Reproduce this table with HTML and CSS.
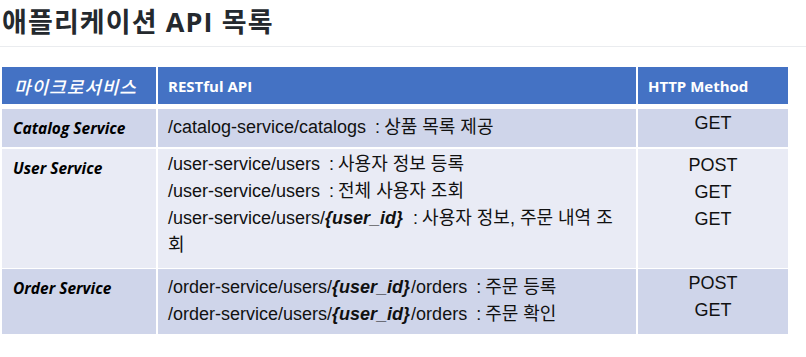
FILE: index.html
```html
<!DOCTYPE html>
<html lang="ko">
<head>
<meta charset="utf-8">
<title>애플리케이션 API 목록</title>
<link rel="stylesheet" href="styles.css">
</head>
<body>
<header class="page-head">
  <h1 class="title">애플리케이션 API 목록</h1>
</header>
<section class="api-table">
  <div class="row head">
    <div class="cell svc-head">마이크로서비스</div>
    <div class="cell col-head">RESTful API</div>
    <div class="cell col-head">HTTP Method</div>
  </div>
  <div class="row odd r1">
    <div class="cell svc">Catalog Service</div>
    <div class="cell api">/catalog-service/catalogs<span class="sep">:</span>상품 목록 제공</div>
    <div class="cell method">GET</div>
  </div>
  <div class="row even r2">
    <div class="cell svc">User Service</div>
    <div class="cell api">
      <div>/user-service/users<span class="sep">:</span>사용자 정보 등록</div>
      <div>/user-service/users<span class="sep">:</span>전체 사용자 조회</div>
      <div>/user-service/users/<b class="param">{user_id}</b><span class="sep">:</span>사용자 정보, 주문 내역 조회</div>
    </div>
    <div class="cell method">
      <div>POST</div>
      <div>GET</div>
      <div>GET</div>
    </div>
  </div>
  <div class="row odd r3">
    <div class="cell svc">Order Service</div>
    <div class="cell api">
      <div>/order-service/users/<b class="param">{user_id}</b>/orders<span class="sep">:</span>주문 등록</div>
      <div>/order-service/users/<b class="param">{user_id}</b>/orders<span class="sep">:</span>주문 확인</div>
    </div>
    <div class="cell method">
      <div>POST</div>
      <div>GET</div>
    </div>
  </div>
</section>
</body>
</html>
```

FILE: styles.css
```css
html, body {
  margin: 0;
  padding: 0;
  background: #ffffff;
}

.page-head {
  height: 46px;
  border-bottom: 1px solid #eaecef;
  padding-left: 2px;
}

.title {
  margin: 0;
  padding-top: 4px;
  font-family: "Open Sans", "Noto Sans CJK KR", sans-serif;
  font-weight: 700;
  font-size: 27px;
  line-height: 36px;
  color: #24292e;
  letter-spacing: 1.1px;
}

.api-table {
  margin: 20px 0 0 2px;
  width: 786px;
  display: flex;
  flex-direction: column;
  gap: 2px;
}

.row {
  display: grid;
  grid-template-columns: 154px 478px 150px;
  column-gap: 2px;
}

.row.head { height: 37px; margin-bottom: 3px; }
.row.r1 { height: 38px; }
.row.r2 { height: 119px; }
.row.r3 { height: 65px; margin-top: -1px; }

.head .cell {
  background: #4472c4;
  color: #ffffff;
  display: flex;
  align-items: center;
}

.svc-head {
  padding-left: 12px;
  font-family: "Noto Sans CJK KR", sans-serif;
  font-style: italic;
  font-size: 18px;
  font-weight: 500;
  letter-spacing: 1px;
}

.col-head {
  padding-left: 10px;
  font-family: "Open Sans", "Noto Sans CJK KR", sans-serif;
  font-weight: 700;
  font-size: 15px;
}

.odd .cell { background: #cfd5ea; }
.even .cell { background: #e9ebf5; }

.svc {
  padding: 9px 0 0 11px;
  font-family: "Open Sans", sans-serif;
  font-weight: 700;
  font-style: italic;
  font-size: 15.5px;
  line-height: 20px;
  color: #000000;
}

.api {
  padding: 5px 14px 0 10px;
  font-family: "Liberation Sans", "Noto Sans CJK KR", sans-serif;
  font-size: 18px;
  line-height: 27px;
  color: #111111;
}

.param {
  font-weight: 700;
  font-style: italic;
  padding-right: 1px;
}

.r2 .api { padding-top: 2px; }

.sep {
  margin: 0 4px 0 9px;
}

.method {
  padding-top: 1px;
  text-align: center;
  font-family: "Liberation Sans", sans-serif;
  font-size: 18px;
  line-height: 27px;
  color: #111111;
}

.r2 .method { padding-top: 3px; }
```
